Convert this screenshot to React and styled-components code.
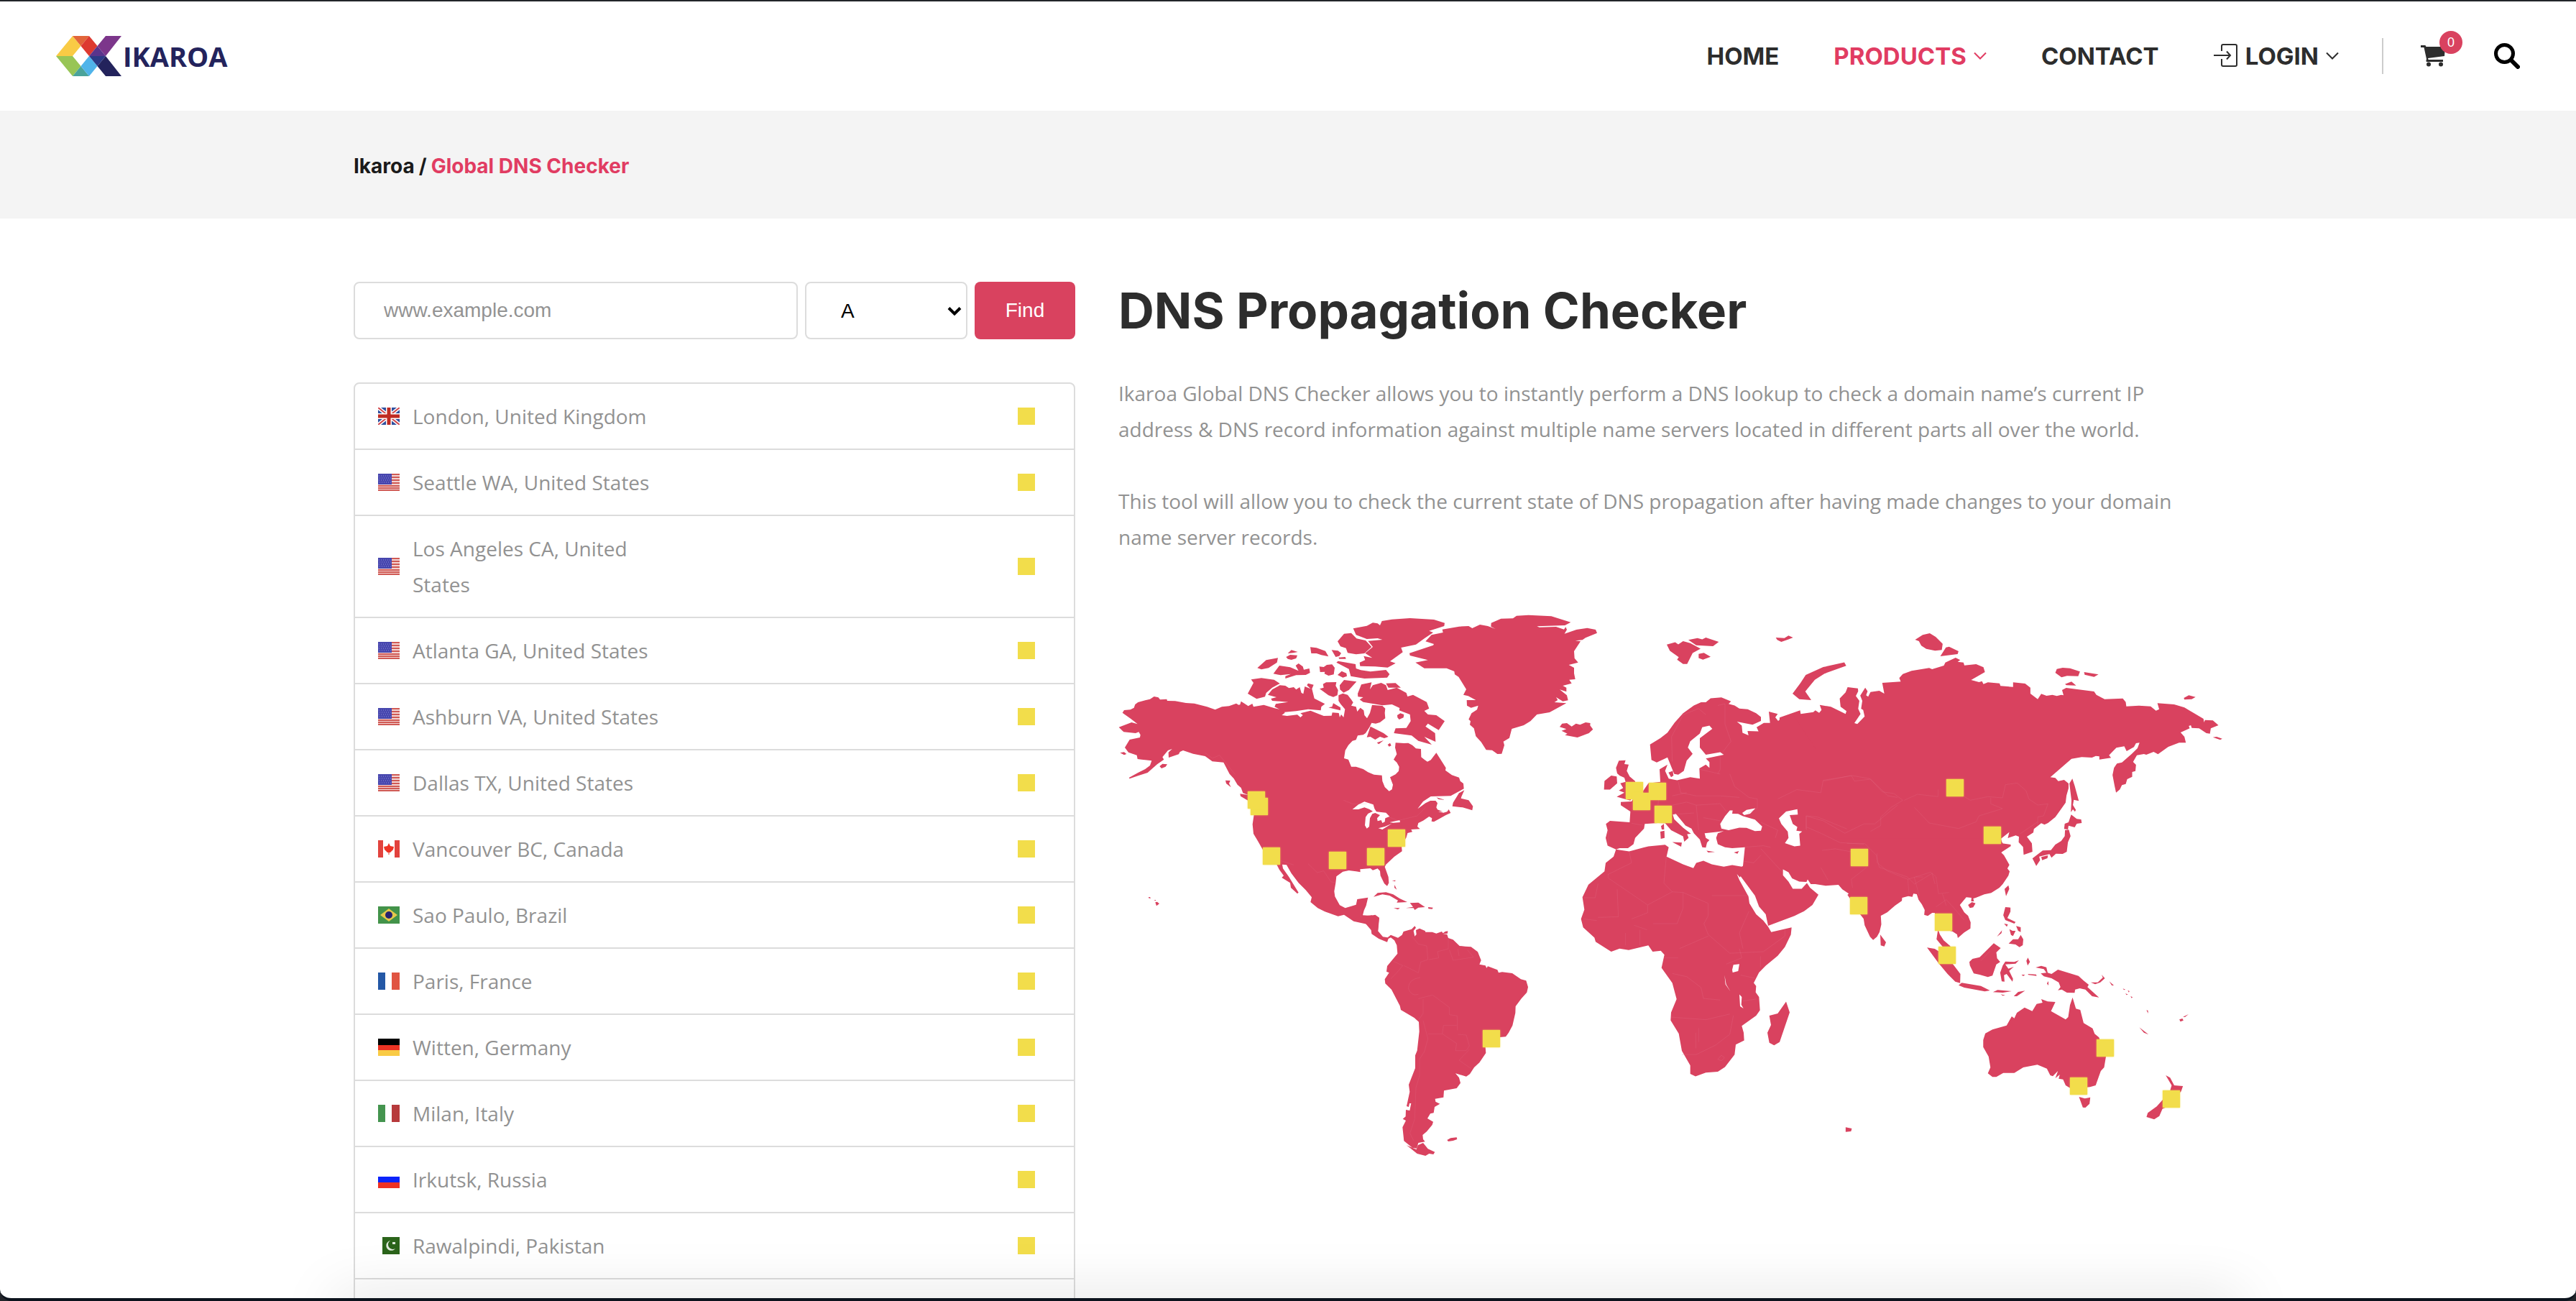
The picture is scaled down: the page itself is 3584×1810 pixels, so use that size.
import React from "react";
import styled, { createGlobalStyle } from "styled-components";

const color = {
  accent: "#d9425f",
  link: "#e13c62",
  ink: "#2d2d2d",
  muted: "#929292",
  line: "#dcdcdc",
  band: "#f4f4f4",
  pin: "#f2dd4b",
  frame: "#22252a",
};

const display = `Inter, "Open Sans", sans-serif`;
const body = `"Open Sans", "Noto Sans", sans-serif`;
const system = `"Liberation Sans", Arial, sans-serif`;

const GlobalStyle = createGlobalStyle`
  *, *::before, *::after { box-sizing: border-box; }
  body { margin: 0; background: ${color.frame}; font-family: ${body}; font-size: 28px; line-height: 50px; color: ${color.muted}; }
  h1, p, ul, ol { margin: 0; padding: 0; }
  ul, ol { list-style: none; }
  a { color: inherit; text-decoration: none; }
`;

const Window = styled.div`
  position: relative;
  display: flex;
  flex-direction: column;
  height: 100vh;
  overflow: hidden;
  background: #fff;
  border-top: 2px solid ${color.frame};
  border-bottom: 4px solid #0c131d;
  border-radius: 0 0 16px 16px;
`;

const Header = styled.header`
  flex: none;
  display: flex;
  align-items: center;
  justify-content: space-between;
  height: 152px;
  padding: 0 78px;
`;

const Brand = styled.a`
  display: flex;
  align-items: center;
  gap: 2px;
  font-size: 38px;
  font-weight: 700;
  color: #23235c;
`;

const Nav = styled.nav`
  display: flex;
  align-items: center;
`;

const Menu = styled.ul`
  display: flex;
  align-items: center;
  gap: 76px;
`;

const MenuLink = styled.a`
  display: flex;
  align-items: center;
  gap: 10px;
  font-family: ${display};
  font-size: 33px;
  font-weight: 700;
  color: ${(p) => (p.$active ? color.link : color.ink)};
`;

const Tools = styled.div`
  display: flex;
  align-items: center;
  gap: 68px;
  height: 50px;
  margin-left: 60px;
  padding-left: 52px;
  border-left: 2px solid #ccc;
`;

const IconButton = styled.button`
  position: relative;
  display: flex;
  padding: 0;
  border: 0;
  background: none;
  color: ${(p) => p.$tone};
`;

const Badge = styled.span`
  position: absolute;
  top: -20px;
  right: -24px;
  width: 32px;
  height: 32px;
  border-radius: 50%;
  background: ${color.accent};
  color: #fff;
  font-family: ${system};
  font-size: 18px;
  line-height: 32px;
  text-align: center;
`;

const Container = styled.div`
  width: calc(100% - 80px);
  max-width: 2600px;
  margin: 0 auto;
`;

const Band = styled.div`
  flex: none;
  padding: 52px 0 48px;
  background: ${color.band};
`;

const Crumbs = styled.ol`
  display: flex;
  gap: 6px;
  font-family: ${display};
  font-size: 28px;
  font-weight: 700;
  color: #1a1a1a;
`;

const Crumb = styled.li`
  color: ${(p) => (p.$current ? color.link : "inherit")};
`;

const Main = styled.main`
  flex: 1;
  min-height: 0;
  padding-top: 88px;
  overflow: hidden;
`;

const Columns = styled(Container)`
  display: grid;
  grid-template-columns: 1004fr 1536fr;
  gap: 60px;
  align-items: start;
`;

const LookupForm = styled.form`
  display: grid;
  grid-template-columns: 1fr 226px 140px;
  gap: 10px;
  margin-bottom: 60px;
`;

const Field = styled.input`
  width: 100%;
  height: 80px;
  padding: 0 40px;
  border: 2px solid ${color.line};
  border-radius: 8px;
  background: #fff;
  font-family: ${system};
  font-size: 28px;
  &::placeholder { color: #939393; opacity: 1; }
`;

const SelectBox = styled.div`
  position: relative;
  svg { position: absolute; right: 8px; top: 34px; pointer-events: none; }
`;

const RecordSelect = styled.select`
  appearance: none;
  width: 100%;
  height: 80px;
  padding: 0 48px;
  border: 2px solid ${color.line};
  border-radius: 8px;
  background: #fff;
  color: #000;
  font-family: ${system};
  font-size: 28px;
`;

const FindButton = styled.button`
  height: 80px;
  border: 0;
  border-radius: 8px;
  background: ${color.accent};
  color: #fff;
  font-family: ${system};
  font-size: 28px;
`;

const ServerList = styled.ul`
  border: 2px solid ${color.line};
  border-radius: 8px;
`;

const ServerRow = styled.li`
  display: grid;
  grid-template-columns: 30px 360px 1fr;
  column-gap: 18px;
  align-items: center;
  padding: 20px 54px 20px 32px;
  & + & { border-top: 2px solid ${color.line}; }
`;

const Status = styled.span`
  justify-self: end;
  width: 24px;
  height: 24px;
  background: ${color.pin};
`;

const Title = styled.h1`
  margin-bottom: 50px;
  font-family: ${display};
  font-size: 69px;
  font-weight: 700;
  line-height: 80px;
  color: ${color.ink};
`;

const Text = styled.p`
  & + & { margin-top: 50px; }
`;

const MapFrame = styled.div`
  position: relative;
  margin-top: 78px;
  & > svg { display: block; width: 100%; height: auto; }
`;

const Pin = styled.span`
  position: absolute;
  width: 24px;
  height: 24px;
  margin: -12px 0 0 -12px;
  background: ${color.pin};
  box-shadow: 0 0 2px ${color.pin};
`;

const BottomShade = styled.div`
  position: absolute;
  left: 13%;
  right: 13%;
  bottom: -40px;
  height: 40px;
  box-shadow: 0 0 80px rgba(0, 0, 0, 0.15);
  pointer-events: none;
`;

const Logo = () => (
  <svg width="91" height="56" viewBox="0 0 91 56" aria-hidden="true">
    <path fill="#f9cb45" d="M0 28L23 0L34.5 14L23 28Z" />
    <path fill="#e2653a" d="M23 0H46L34.5 14Z" />
    <path fill="#dd3a31" d="M46 0L57.5 14L46 28L34.5 14Z" />
    <path fill="#7c368b" d="M69 0H91L69 28L57.5 14Z" />
    <path fill="#5a348c" d="M57.5 14L69 28H46Z" />
    <path fill="#98c556" d="M0 28H23L34.5 42L23 56Z" />
    <path fill="#4aa39a" d="M34.5 42L46 56H23Z" />
    <path fill="#50b4ea" d="M46 28L57.5 42L46 56L34.5 42Z" />
    <path fill="#2c3a86" d="M46 28H69L57.5 42Z" />
    <path fill="#23235c" d="M69 28L91 56H69L57.5 42Z" />
  </svg>
);

const Chevron = () => (
  <svg width="18" height="12" viewBox="0 0 18 12" fill="none" stroke="currentColor" strokeWidth="2" aria-hidden="true">
    <path d="M1 1.500L9 9.500L17 1.500" />
  </svg>
);

const SelectArrow = () => (
  <svg width="20" height="14" viewBox="0 0 20 14" fill="none" stroke="#000" strokeWidth="4" aria-hidden="true">
    <path d="M2 2.500L10 10.500L18 2.500" />
  </svg>
);

const LoginIcon = () => (
  <svg width="34" height="34" viewBox="0 0 34 34" fill="none" stroke="currentColor" strokeWidth="2" aria-hidden="true">
    <path d="M11 10V3Q11 1 13 1H30Q32 1 32 3V29Q32 31 30 31H13Q11 31 11 29V21M0 16H22M18 10.500L23 16L18 21.500" />
  </svg>
);

const CartIcon = () => (
  <svg width="34" height="30" viewBox="0 0 34 30" fill="currentColor" aria-hidden="true">
    <path d="M0 0H6Q7 0 7.400 2H34L33 15L10 18L10.600 20H31V23H8Q7 22 8 19L4.500 3H0Z" />
    <circle cx="11" cy="26.500" r="3" />
    <circle cx="28" cy="26.500" r="3" />
  </svg>
);

const SearchIcon = () => (
  <svg width="36" height="36" viewBox="0 0 36 36" fill="none" stroke="currentColor" aria-hidden="true">
    <circle cx="14.500" cy="14.500" r="12" strokeWidth="5" />
    <path d="M23.500 23.500L33 33" strokeWidth="6" strokeLinecap="round" />
  </svg>
);

const flagArt = {
  gb: (
    <>
      <path fill="#2f4f9e" d="M0 0H30V24H0Z" />
      <path stroke="#fff" strokeWidth="5" d="M0 0L30 24M30 0L0 24" />
      <path stroke="#d0454a" strokeWidth="2" d="M0 0L30 24M30 0L0 24" />
      <path stroke="#fff" strokeWidth="8" d="M15 0V24M0 12H30" />
      <path stroke="#bf2a22" strokeWidth="5" d="M15 0V24M0 12H30" />
    </>
  ),
  us: (
    <>
      <path fill="#f3d4d2" d="M0 0H30V24H0Z" />
      <path stroke="#d05a55" strokeWidth="2" d="M0 1H30M0 5H30M0 9H30M0 13H30M0 17H30M0 20H30M0 23H30" />
      <path fill="#4746ae" d="M0 0H19V15H0Z" />
      <path stroke="#8c8cd8" strokeWidth="1" strokeDasharray="1 2" d="M1 3H18M2 6H18M1 9H18M2 12H18" />
    </>
  ),
  ca: (
    <>
      <path fill="#fff" d="M0 0H30V24H0Z" />
      <path fill="#e2433e" d="M0 0H7V24H0ZM23 0H30V24H23Z" />
      <path fill="#ee3325" d="M15 4L17 8L22 9L21 13L17 17H15.500V20H14.500V17H13L9 13L8 9L13 8Z" />
    </>
  ),
  br: (
    <>
      <path fill="#43934a" d="M0 0H30V24H0Z" />
      <path fill="#e5c94b" d="M15 3L27 12L15 21L3 12Z" />
      <circle cx="15" cy="12" r="5" fill="#27236f" />
    </>
  ),
  fr: <path d="M0 0H10V24H0Z" fill="#2458a6" />,
  de: (
    <>
      <path d="M0 0H30V9H0Z" />
      <path fill="#ec3323" d="M0 9H30V16H0Z" />
      <path fill="#f9cb45" d="M0 16H30V24H0Z" />
    </>
  ),
  it: <path d="M0 0H10V24H0Z" fill="#44944f" />,
  ru: (
    <>
      <path fill="#0b24fb" d="M0 8H30V16H0Z" />
      <path fill="#ee3124" d="M0 16H30V24H0Z" />
    </>
  ),
  pk: (
    <>
      <path fill="#2b641b" d="M6 0H30V24H6Z" />
      <path fill="#dfe9dc" d="M17 5A7 7 0 1 0 24 16A6.500 6.500 0 0 1 17 5ZM20 7H24V10H20Z" />
    </>
  ),
};
const thirdStripe = { fr: "#e05442", it: "#b73a3c" };

const Flag = ({ code }) => (
  <svg width="30" height="24" viewBox="0 0 30 24" aria-hidden="true">
    {flagArt[code]}
    {thirdStripe[code] && <path fill={thirdStripe[code]} d="M19 0H30V24H19Z" />}
  </svg>
);

const servers = [
  ["gb", "London, United Kingdom"],
  ["us", "Seattle WA, United States"],
  ["us", "Los Angeles CA, United States"],
  ["us", "Atlanta GA, United States"],
  ["us", "Ashburn VA, United States"],
  ["us", "Dallas TX, United States"],
  ["ca", "Vancouver BC, Canada"],
  ["br", "Sao Paulo, Brazil"],
  ["fr", "Paris, France"],
  ["de", "Witten, Germany"],
  ["it", "Milan, Italy"],
  ["ru", "Irkutsk, Russia"],
  ["pk", "Rawalpindi, Pakistan"],
];

const MAP_W = 1536;
const MAP_H = 780;

const pins = [
  [196, 272], [192, 263], [213, 341], [305, 347], [358, 342], [387, 316],
  [519, 595], [718, 250], [728, 265], [750, 251], [758, 283],
  [1164, 246], [1216, 312], [1031, 343], [1030, 410], [1148, 433],
  [1153, 479], [1373, 608], [1336, 661], [1465, 679],
];

const northAmerica = {
  place: "translate(-16 -10) scale(0.33333)",
  land: [
    "M65 455L72 444L98 442L113 434L118 420L130 411L160 403L180 398L197 387L215 391L222 400L250 398L252 405L285 406L330 414L365 416L418 430L452 442L480 430L510 427L540 416L550 422L556 421L560 407L580 420L590 427L607 417L612 430L655 422L700 436L735 444L743 455L730 465L752 468L795 463L808 474L818 465L808 457L850 446L880 458L905 468L938 467L941 454L968 456L972 474L978 462L988 474L994 440L975 418L967 405L967 382L985 374L1005 380L1020 400L1028 412L1020 425L1040 430L1045 450L1058 434L1072 445L1075 465L1086 478L1098 456L1107 422L1150 426L1162 437L1160 455L1162 478L1140 495L1122 500L1105 497L1096 515L1080 540L1070 547L1047 550L1040 568L1025 572L1008 590L995 612L990 645L1008 650L1020 680L1040 680L1070 690L1090 703L1115 713L1148 716L1150 740L1160 765L1178 782L1190 775L1194 755L1182 724L1205 712L1218 698L1220 680L1210 662L1197 650L1210 628L1203 600L1205 580L1240 582L1258 581L1275 590L1290 604L1311 606L1312 640L1325 650L1338 659L1352 652L1375 622L1415 685L1413 695L1440 715L1470 725L1475 740L1488 750L1490 772L1435 802L1352 804L1320 825L1297 856L1330 832L1350 822L1372 822L1380 832L1375 850L1385 868L1405 872L1420 868L1427 858L1435 873L1415 882L1395 893L1365 910L1355 908L1357 895L1345 888L1320 905L1300 915L1296 930L1307 940L1270 942L1275 952L1255 957L1250 975L1230 1010L1232 1033L1200 1055L1165 1088L1160 1098L1175 1140L1177 1165L1170 1178L1158 1168L1142 1135L1140 1115L1130 1105L1110 1112L1100 1104L1057 1108L1058 1120L1040 1117L1010 1113L985 1118L958 1138L955 1165L949 1200L952 1222L972 1258L995 1270L1040 1256L1045 1233L1090 1226L1082 1260L1073 1280L1068 1300L1100 1302L1120 1298L1137 1310L1132 1365L1120 1375L1085 1337L1030 1325L990 1298L965 1304L910 1285L880 1270L850 1245L855 1225L830 1195L800 1165L770 1125L750 1090L732 1088L735 1105L760 1140L775 1165L800 1205L795 1210L768 1185L765 1165L730 1143L738 1135L720 1110L708 1087L650 1025L630 990L612 960L608 920L614 880L590 822L558 803L556 793L590 798L568 790L560 768L545 755L530 730L512 710L487 662L440 658L410 636L360 626L318 612L305 618L300 628L258 642L257 620L272 606L255 612L232 640L238 650L210 670L170 705L130 718L95 730L92 726L130 705L160 690L180 675L187 655L160 652L145 650L128 648L125 632L90 620L75 600L95 567L138 558L140 547L133 535L120 540L70 535L50 515L103 495L128 502L100 480Z",
    "M55 622L72 619L82 627L72 631ZM220 678L232 668L252 670L245 680L228 687ZM495 737L515 738L510 750L518 766L498 750Z",
    "M173 1225L180 1224L183 1229L176 1229ZM196 1236L205 1236L203 1240ZM202 1246L210 1244L219 1252L207 1261Z",
    "M602 316L645 310L698 317L722 333L690 350L665 372L660 388L625 397L588 375L612 330Z",
    "M672 380L690 358L722 340L745 342L760 352L780 348L790 358L805 348L812 372L820 376L826 345L850 355L835 340L840 332L863 338L856 355L866 395L910 418L895 430L893 445L840 440L790 448L742 452L700 430L705 418L757 410L690 405L685 396L708 390Z",
    "M628 268L665 235L714 226L710 245L675 268L645 274ZM695 292L720 258L765 265L800 280L788 258L800 249L818 262L822 275L845 270L848 288L830 297L790 298L745 312L745 302L768 293L725 298ZM748 222L765 213L795 215L790 228L770 234L755 230ZM755 207L770 193L797 201L778 205Z",
    "M849 181L875 184L912 197L925 220L895 214L875 207L853 207ZM938 193L965 196L978 206L970 218L955 222ZM967 224L995 222L998 230L970 230Z",
    "M887 262L905 264L918 255L940 253L951 267L947 295L925 300L908 292L910 284L890 285ZM888 355L905 350L902 335L915 328L958 327L955 342L965 360L962 382L945 389L925 382ZM925 433L940 430L945 415L975 433L975 445L955 440ZM963 297L980 281L1000 290L1002 302L985 308Z",
    "M958 245L965 239L1038 252L1040 270L1060 277L1100 283L1165 276L1180 294L1170 308L1075 312L1018 302L1010 272Z",
    "M972 340L990 318L1042 325L1010 360L988 371L973 358Z",
    "M963 157L990 125L1020 122L1042 145L1080 153L1105 180L1075 207L1040 211L1005 205L998 185L975 178Z",
    "M1028 103L1085 92L1110 79L1130 82L1140 90L1148 72L1190 65L1265 60L1365 66L1410 80L1408 93L1345 113L1362 120L1325 145L1290 170L1228 183L1235 202L1182 240L1205 248L1172 266L1120 262L1057 260L1055 245L1078 235L1072 218L1108 226L1078 206L1110 180L1090 155L1150 150L1130 144L1085 147L1040 130Z",
    "M1047 375L1062 337L1105 328L1098 357L1110 340L1145 330L1165 340L1172 360L1210 350L1250 372L1255 387L1278 380L1335 410L1345 437L1325 447L1340 462L1375 465L1410 490L1385 527L1340 500L1330 512L1370 540L1372 576L1325 555L1356 588L1300 572L1272 550L1198 540L1205 520L1250 518L1268 490L1265 462L1220 445L1222 435L1190 420L1150 424L1070 410L1055 400L1070 390L1048 388ZM1165 332L1205 331L1227 350L1175 350ZM1212 465L1225 457L1240 462L1238 475L1220 483L1213 475Z",
    "M1085 557L1100 512L1155 540L1175 555L1158 561L1140 555L1120 567L1100 555ZM1127 580L1155 570L1135 586ZM1172 588L1182 581L1187 592L1178 596Z",
    "M1442 845L1445 830L1470 790L1492 778L1480 805L1478 812L1510 820L1528 845L1525 862L1485 850ZM1375 808L1410 818L1385 816ZM1378 858L1402 868L1382 866Z",
    "M1113 1223L1130 1207L1165 1204L1195 1213L1222 1230L1254 1245L1210 1247L1215 1238L1180 1218L1150 1213ZM1265 1249L1300 1247L1328 1266L1300 1268L1285 1278L1280 1270L1248 1270L1278 1265ZM1197 1270L1223 1270L1215 1276ZM1341 1266L1361 1268L1358 1274L1342 1273ZM1190 1155L1205 1154L1203 1159ZM1201 1173L1210 1193L1200 1185Z",
  ],
  water: "M1025 858L1050 838L1075 826L1112 838L1117 855L1125 868L1165 872L1180 888L1162 895L1160 910L1150 915L1145 903L1130 907L1128 895L1140 882L1120 873L1108 877L1098 895L1095 930L1085 938L1077 925L1080 890L1090 876L1110 866L1095 857L1075 850L1050 858ZM1133 937L1160 930L1190 917L1150 942ZM1180 912L1222 903L1224 912L1195 914Z",
  borders: "M410 622L440 645L470 632L535 712M988 820L1025 835L1085 835M1172 888L1215 905L1295 885L1330 850M725 1072L780 1090M840 1085L878 1122L905 1115L935 1160L955 1165M1060 1275V1310",
};

const greenland = {
  place: "translate(284 -20) scale(0.33333)",
  land: [
    "M363 236L462 203L465 198L430 187L455 160L503 150L500 137L570 125L610 123L625 132L657 117L690 123L722 135L703 125L704 110L745 92L795 91L810 80L860 77L955 82L1036 107L1012 120L895 124L905 128L975 126L1008 137L1015 127L1020 138L1010 155L1060 138L1105 131L1140 138L1146 152L1098 172L1085 181L1055 184L1077 187L1050 228L1052 257L1067 275L1028 285L1050 297V320L1055 345L1030 347L1040 362L1003 372L1018 380V397L990 388L1020 412L1025 433L1003 437L975 420L982 432L968 441L1018 445L948 483L895 492L868 520L840 537L790 552L780 590L755 605L759 620L748 656L730 657L708 641L683 640L662 607L640 583L632 550L615 535L618 520L610 512L622 487L645 472L650 455L620 464L603 455L602 432L640 432L608 415L588 410L600 387L568 335L552 325L550 312L518 299L425 299L388 275L440 265L365 246Z",
    "M990 544L1000 530L1020 528L1040 542L1058 530L1075 535L1098 525L1118 528L1117 538L1129 554L1112 570L1064 588L1012 578L1022 572L998 560L1018 553Z",
  ],
};

const southAmerica = {
  place: "translate(244 330) scale(0.33333)",
  land: [
    "M245 298L280 285L325 280L356 292L351 345L372 370L392 373L405 362L435 374L452 362L458 348L492 338L505 325L510 332L500 345L505 368L512 360L510 342L525 335L548 345L550 350L578 350L595 356L618 348L625 358L640 360L645 375L665 382L692 408L715 410L740 412L768 433L782 468L775 485L800 490L805 500L810 493L850 508L855 520L870 517L912 522L948 547L970 553L978 580L973 602L950 628L926 660L925 688L913 740L897 770L885 787L860 789L800 830L802 855L775 895L753 915L735 943L720 953L675 940L690 958L696 980L680 1002L627 1012L625 1040L590 1046L592 1058L610 1067L588 1080L584 1105L570 1108L558 1128L582 1142L578 1155L555 1183L538 1197L540 1215L548 1225L520 1230L513 1253L495 1250L460 1222L454 1165L468 1137L455 1130L467 1120L468 1092L484 1095L490 1065L483 1065L480 1080L471 1077L484 1017L480 987L507 918L507 865L515 845L524 765L522 725L503 708L447 675L443 658L408 590L382 565L380 547L398 520L387 515L390 492L410 468L433 440L430 405L420 385L405 373L395 378L390 392L355 378L325 358L323 342L300 315L290 310Z",
    "M471 1240L512 1258L518 1240L540 1230L560 1255L589 1268L583 1278L565 1275L550 1284L515 1275ZM640 1218L655 1210L680 1207L682 1215L665 1221L645 1224ZM632 348L643 346L642 356L620 357Z",
  ],
  borders: "M415 472L455 490L430 520L405 545M460 490L520 520L530 475L560 465L555 408L520 400L495 370M528 540Q480 545 478 585Q490 620 520 610M520 628L580 613L650 665V695L682 700L683 760M522 715L540 690L540 630M540 720L560 795L545 850L525 880V950L510 1000L505 1130L485 1190L500 1220M560 775L620 775L625 740L680 740M620 775L680 815L675 845L720 845L733 825L720 780L685 777M733 840L690 885L740 920M565 465L605 458L600 432L645 420L645 380M650 425L665 468L750 455L725 425M685 420L690 450",
};

const europeAfrica = {
  place: "translate(604 10) scale(0.33333 0.43367)",
  land: [
    "M407 405L450 385L480 367L510 335L545 305L590 280L620 270H640L660 257L705 254L745 267L735 275L760 280L780 290L815 292L850 305L870 317L870 330L835 342L770 332L790 345L793 368L818 376L814 362L860 363L852 350L882 336L908 336L903 300L940 307L930 318L942 330L960 318L1000 306L1100 420V853L1078 853L1065 838L1060 846L1030 845L1000 835L985 815L962 806V825L985 845L1003 868L1040 868L1062 850L1075 865L1110 887L1085 920L1050 940L1010 955L900 987L890 950L862 925L845 890L785 828L782 832L760 812L795 795L803 735L750 738L720 735L690 725L683 705L690 690L715 683L685 686L635 690L640 705L655 712L645 720L640 736L625 735L615 710L590 690L580 675L555 665L515 628L502 630L508 645L545 672L578 692L562 693L568 705L550 717L545 700L495 680L470 658L440 657L385 660L382 675L345 705L338 725L315 738L280 738L265 742L230 730L222 705L230 680L223 660L240 650L322 655L325 620L285 600V590L330 588L340 575L375 558L400 530L450 525L447 485L480 470L470 490L485 515L520 520L575 510L615 515L613 482L640 470L655 480V462L640 450L715 438L700 430L640 438L615 415V385L667 355L655 345L625 350L615 370L575 395L565 415L585 435L560 457L548 490L525 502L508 500L480 447L435 463L413 455Z",
    "M265 742L320 748L400 732L470 727L485 735L476 765L545 790L588 802L600 785L630 778L665 790L715 797L750 792L790 797L795 800L780 830L765 812L780 840L818 893L822 915L850 950L880 970L900 990L913 1007L998 992L995 1015L970 1055L940 1083L890 1115L862 1137L840 1170L850 1180L848 1200L862 1215L866 1258L850 1275L790 1308L798 1330L800 1355L765 1368L760 1400L720 1440L690 1455L640 1458L597 1470L575 1462V1435L540 1388L527 1333L493 1290L495 1265L518 1222L500 1170L455 1122L467 1080L452 1067L418 1070L400 1050L318 1065L280 1060L245 1070L180 1038L175 1025L128 992L119 965L133 935L125 895L150 855L217 812L222 785L255 765Z",
    "M477 85L512 77L525 84L545 74L575 80L618 98L585 112L562 147L545 147L520 133L527 125L490 105ZM567 70L605 64L625 68L640 62L694 76L670 90L600 87ZM610 115L632 111L660 124L628 133L610 128Z",
    "M932 62L968 64L985 56L1004 62L985 68L955 76L938 70Z",
    "M1002 242L1035 208L1057 182L1130 157L1218 142L1226 153L1135 178L1095 198L1055 235L1080 263L1030 260Z",
    "M217 522L245 505L268 508L270 530L240 550L215 550ZM265 480L277 457L305 456L300 468L318 470L310 490L322 508L345 523V560L325 585L268 573L300 560L277 553L295 545L283 530L305 525L300 512L280 505L270 498Z",
    "M500 718L540 720L537 733ZM450 685L467 682L468 705L452 708ZM453 667L465 660L466 678L456 678ZM643 746L678 750L650 752ZM757 752L778 747L772 756ZM484 495L502 490L505 505L495 510Z",
    "M905 1275L940 1268L975 1230L990 1265L948 1360L925 1370L905 1362L897 1330L912 1305Z",
    "M1368 1015L1392 1040L1385 1053L1370 1050Z",
  ],
  water: "M700 660L720 635L740 617H752L750 627L775 628L795 635L845 646L875 668L870 682L845 683L810 673L780 672L735 680L705 675ZM792 625L810 615L847 610L825 627L800 632ZM945 642L975 620L1022 613L1024 630L990 632L1003 660L1022 670L1018 682L1042 684L1030 692L1034 730L1010 732L970 722L985 705L982 685L955 660ZM750 1128L755 1112L780 1110L775 1132L752 1137ZM718 1145L725 1175L742 1197L722 1175ZM780 1207L790 1215L788 1240L797 1252L783 1245Z",
  borders: "M500 460L497 380L545 310L610 290L640 310M690 280L720 275V340L745 395L710 430M700 440V485L690 500M615 485L700 500M740 500L760 540L820 575L855 580V610L815 625M525 525L535 560L600 570L700 570L780 575M500 570L560 560M500 600L560 590L600 600L700 595L725 620M600 600L610 680M630 640L700 650M440 600L445 570M330 658L382 665M232 680V730M500 630L590 625M800 735L880 730L910 735M870 655L940 680L930 705M870 740L960 815M800 780L840 785L870 760M1060 680V635L1130 650L1220 690L1300 660H1345L1440 600M1060 670L1120 690L1200 720L1300 725M940 580L1020 550L1120 560L1130 520L1250 505L1325 515L1400 570L1440 575M1125 745L1180 740L1250 750M1120 800L1150 840M320 748L330 785L232 822M235 835L397 920V945L330 965M270 870L275 958L190 960M232 820V835M125 897H178L190 852M475 765L465 850L500 878L397 920M500 878L545 880V930L520 980L420 980M545 880L650 915V955L632 980L650 1015M665 890H818M650 1015L740 1075L880 1070L970 1020V1000M820 940L780 1010L795 1060M530 1060L650 1020M780 1060L790 1090L725 1110M868 1085V1120M465 1090H525M500 1140L560 1150L620 1185L630 1220L700 1225M785 1145L845 1155M795 1228L850 1222M495 1280L640 1288L740 1270M598 1330V1380M610 1315V1360M540 1400L600 1400L680 1370L740 1335L755 1275M690 1415L705 1402L718 1410L705 1420Z M305 1010V1050M365 1000V1050M340 985L395 1000M130 965L185 970",
};

const asia = {
  place: "translate(924 10) scale(0.40816 0.33333)",
  land: [
    "M-10 415L60 385L62 400L105 392L112 385L125 395L133 383L127 362L165 370L215 400L218 388L198 370L195 335L215 310L222 288L257 293L258 305L250 325L262 345L258 378L266 400L245 438L255 442L280 410L275 383L268 378L272 345L265 323L282 290L290 305L285 322L292 328L300 308L330 303L347 315L340 270L403 265L398 250L410 233L440 220L500 208L510 213L550 198L555 185L590 165L606 175L597 182L617 185L620 197L660 192L685 205L690 225L643 258L670 267L680 263L685 275L700 268L740 272L743 283L786 287V268L827 273L845 290V315L870 338L882 316L900 324L920 320L935 325L950 320L958 322L953 300L967 291L1062 306L1070 320L1098 338L1160 335L1170 350L1172 368L1215 365L1255 368L1273 386L1284 380L1278 355L1335 360L1370 373L1435 420L1437 435L1440 425L1467 427L1486 447L1460 460L1457 482L1445 480L1420 460L1395 458L1392 447L1385 450L1388 460L1357 477L1370 495L1375 520L1352 520L1315 537L1280 568L1265 558L1240 570L1232 567L1208 572L1195 600L1205 612L1203 638L1192 642V662L1175 672L1170 692L1157 697L1150 715L1137 728L1132 700L1125 655L1130 625L1140 607L1157 602L1190 567L1210 543L1217 520L1205 522L1198 538L1173 555L1165 535L1138 541L1113 572L1120 583L1080 590V577L1068 575L1055 582L1020 580L985 587L913 664L930 667L940 680L960 675L975 690V710L968 740L965 770L945 805L930 830L905 855L893 862L882 856L857 880L855 895L833 912L850 940L852 975L822 988L820 955L805 935L806 912L795 907L768 918L773 893L745 920L748 940L778 945V952L745 978L740 1000H60L-10 800Z",
    "M452 90L478 70L502 63L522 78L546 107L543 133L520 136L490 128L473 115L465 96ZM538 159L557 122L568 119L600 138L597 150ZM930 228L935 212L955 207L980 209L1014 223L1008 242L970 241L951 247ZM1028 225L1077 235L1062 245L1030 236ZM963 275L985 265L1001 281L968 280ZM1368 333L1385 322L1408 329L1395 338L1370 340ZM1467 497L1480 495L1499 503L1492 508Z",
    "M978 690L988 670L996 700L1010 763L993 758L990 780L1000 800L997 808L990 798L983 810L985 760ZM984 820L1003 838L1018 840L1020 855L1003 858L996 873L975 866L973 882L960 880L962 858L975 852ZM963 885L976 883L982 910L973 935L969 975L955 984L932 983L917 1000L910 985L875 995L878 1010L865 1034L852 1003L887 970L915 968L930 945L950 930L962 910ZM882 997L905 990L903 1002L885 1010Z",
    "M757 1130L770 1115L773 1130L762 1160Z",
  ],
  borders: "M140 680L235 657L245 680L300 672L340 725L380 732L410 760L370 790L335 830V865L300 890M415 760L460 735L530 745L530 715M620 745L640 760L700 745L750 750L760 695L800 688L830 720L840 755L870 780L905 775L890 825L870 830V870M450 790L500 855L600 878L660 850L670 825L750 795L710 775V750M870 850L810 900M80 880V825L120 830L220 880M220 940L280 940L320 990L330 1040L425 1080L450 1110L510 1065L520 1110",
};

const southAsia = {
  place: "translate(984 330) scale(0.35714 0.33333)",
  land: [
    "M-40 -40H680L700 0L684 18L695 30L716 70L708 85L717 97L712 115L690 150L677 165L645 187L618 193L585 207L575 210L578 222H567L568 207L548 205L523 237L540 268L555 282L565 310L564 335L540 352L515 375L512 360L495 348L465 340L440 345L445 360L460 385L485 408L500 440L480 435L455 410L432 380L437 345L425 270L415 270L398 283L384 278L386 258L375 235L362 215L355 192L342 190L338 203L322 200L298 207L297 220L270 240L240 268L215 282L217 318L210 350L200 370L185 383L173 370L152 322L148 295L130 270L95 210L85 195L90 190L65 172L50 153L0 157L-40 150Z",
    "M555 237L570 225L584 230L575 247L562 250ZM395 415L425 420L470 450L500 490L525 525L524 563L505 557L475 525L440 480ZM518 572L530 562L605 575L640 594L620 598L540 582ZM652 601L670 592L725 597L690 603ZM682 610L700 614L690 616ZM733 618L750 600L777 595L745 618Z",
    "M560 475L572 462L600 455L655 397L682 417L665 435L668 460L680 475L665 485L650 532L632 538L600 528L577 523L562 490Z",
    "M690 490L700 473L735 475L753 468L740 482L700 485L712 503L733 495L715 512L730 545L728 557L705 525L695 530L697 557L686 556L680 520ZM782 470L788 457L796 475L787 490ZM763 528L777 528L770 534ZM788 525L820 527L822 533L790 529Z",
    "M692 280L700 246L720 248V265L708 292L740 308L735 315L700 300ZM742 325L760 330L760 350L750 345ZM716 338L728 345L740 345L730 367L722 362ZM713 398L730 380L750 380L760 362L770 380L768 405L755 413L740 402ZM667 370L687 343L685 355ZM695 315L710 318L706 328Z",
    "M818 498L840 491L860 497L865 520L880 525L905 507L985 533L1005 553L1025 570L1020 580L1065 623L1038 618L1012 590L990 585L972 590L970 604L940 603L920 590L905 593L915 580L908 560L880 543L850 535L838 523L860 520L850 505ZM862 565L868 555L868 573ZM1033 560L1060 560L1080 540L1075 528L1088 543L1070 560L1050 568ZM1105 556L1123 573L1115 573ZM1158 586L1168 590L1162 592ZM1168 606L1178 611L1172 613ZM1188 618L1196 622L1192 626ZM1177 593L1184 597L1181 602ZM1250 676L1256 678V690ZM1222 748L1258 778L1240 770ZM1392 704L1414 693L1400 705ZM1378 715L1390 711L1394 719L1382 724Z",
    "M614 800L622 773L650 757L705 740L725 702L735 710L745 687L775 665L805 680L822 650L845 645L840 630L865 640L895 642L878 680L935 715L945 705L952 655L962 623L975 670L992 675L1005 730L1040 752L1048 775L1065 790L1092 870L1085 915L1072 930L1052 990L1030 997L1000 1000L950 1000L935 990L925 965L908 962L912 945L895 960L905 930L885 952L875 948L862 920L825 904L770 915L735 938H692L665 955H650L632 940L642 915L635 870L614 830Z",
    "M987 1038L1010 1045L1031 1040L1028 1067L1012 1083L1002 1082ZM1325 948L1342 958L1358 990L1392 993L1385 1015L1330 1080L1312 1088L1300 1118L1280 1132L1250 1122L1255 1105L1290 1078L1315 1048L1342 1012L1348 990ZM78 1165L102 1170L99 1182L78 1184Z",
  ],
  borders: "M200 20V60L240 95L320 130L410 100L430 120L440 190L480 185M320 130L325 190M345 120L365 200M160 80L100 130L105 165M430 245L470 215L500 250L540 300M455 190L470 240M605 470L640 430M350 120H380",
};

const regions = [northAmerica, greenland, southAmerica, asia, southAsia, europeAfrica];

const WorldMap = () => (
  <MapFrame>
    <svg viewBox={`0 0 ${MAP_W} ${MAP_H}`} role="img" aria-label="World map of name servers">
      {regions.map((r) => (
        <g key={r.place} transform={r.place}>
          <path fill={color.accent} d={r.land.join("")} />
          {r.water && <path fill="#fff" d={r.water} />}
        </g>
      ))}
      {regions.map((r) =>
        r.borders ? (
          <g key={r.place} transform={r.place}>
            <path fill="none" stroke="#e3728a" strokeWidth="1" strokeOpacity="0.7" d={r.borders} />
          </g>
        ) : null
      )}
    </svg>
    {pins.map(([x, y]) => (
      <Pin key={`${x}-${y}`} style={{ left: `${(x / MAP_W) * 100}%`, top: `${(y / MAP_H) * 100}%` }} />
    ))}
  </MapFrame>
);

export default function App() {
  return (
    <Window>
      <GlobalStyle />
      <Header>
        <Brand href="#">
          <Logo />
          IKAROA
        </Brand>
        <Nav>
          <Menu>
            <li><MenuLink href="#">HOME</MenuLink></li>
            <li><MenuLink href="#" $active>PRODUCTS <Chevron /></MenuLink></li>
            <li><MenuLink href="#">CONTACT</MenuLink></li>
            <li><MenuLink href="#"><LoginIcon />LOGIN <Chevron /></MenuLink></li>
          </Menu>
          <Tools>
            <IconButton type="button" aria-label="Cart" $tone={color.ink}>
              <CartIcon />
              <Badge>0</Badge>
            </IconButton>
            <IconButton type="button" aria-label="Search" $tone="#000">
              <SearchIcon />
            </IconButton>
          </Tools>
        </Nav>
      </Header>
      <Band>
        <Container>
          <Crumbs>
            <Crumb><a href="#">Ikaroa</a></Crumb>
            <Crumb aria-hidden="true">/</Crumb>
            <Crumb $current>Global DNS Checker</Crumb>
          </Crumbs>
        </Container>
      </Band>
      <Main>
        <Columns>
          <section>
            <LookupForm onSubmit={(e) => e.preventDefault()}>
              <Field type="text" aria-label="Domain" placeholder="www.example.com" />
              <SelectBox>
                <RecordSelect aria-label="Record type" defaultValue="A">
                  <option>A</option>
                </RecordSelect>
                <SelectArrow />
              </SelectBox>
              <FindButton type="submit">Find</FindButton>
            </LookupForm>
            <ServerList>
              {servers.map(([code, name]) => (
                <ServerRow key={name}>
                  <Flag code={code} />
                  <span>{name}</span>
                  <Status />
                </ServerRow>
              ))}
              <ServerRow aria-hidden="true" />
            </ServerList>
          </section>
          <section>
            <Title>DNS Propagation Checker</Title>
            <Text>
              Ikaroa Global DNS Checker allows you to instantly perform a DNS lookup to check a domain name’s current IP
              address &amp; DNS record information against multiple name servers located in different parts all over the
              world.
            </Text>
            <Text>
              This tool will allow you to check the current state of DNS propagation after having made changes to your
              domain name server records.
            </Text>
            <WorldMap />
          </section>
        </Columns>
      </Main>
      <BottomShade />
    </Window>
  );
}
